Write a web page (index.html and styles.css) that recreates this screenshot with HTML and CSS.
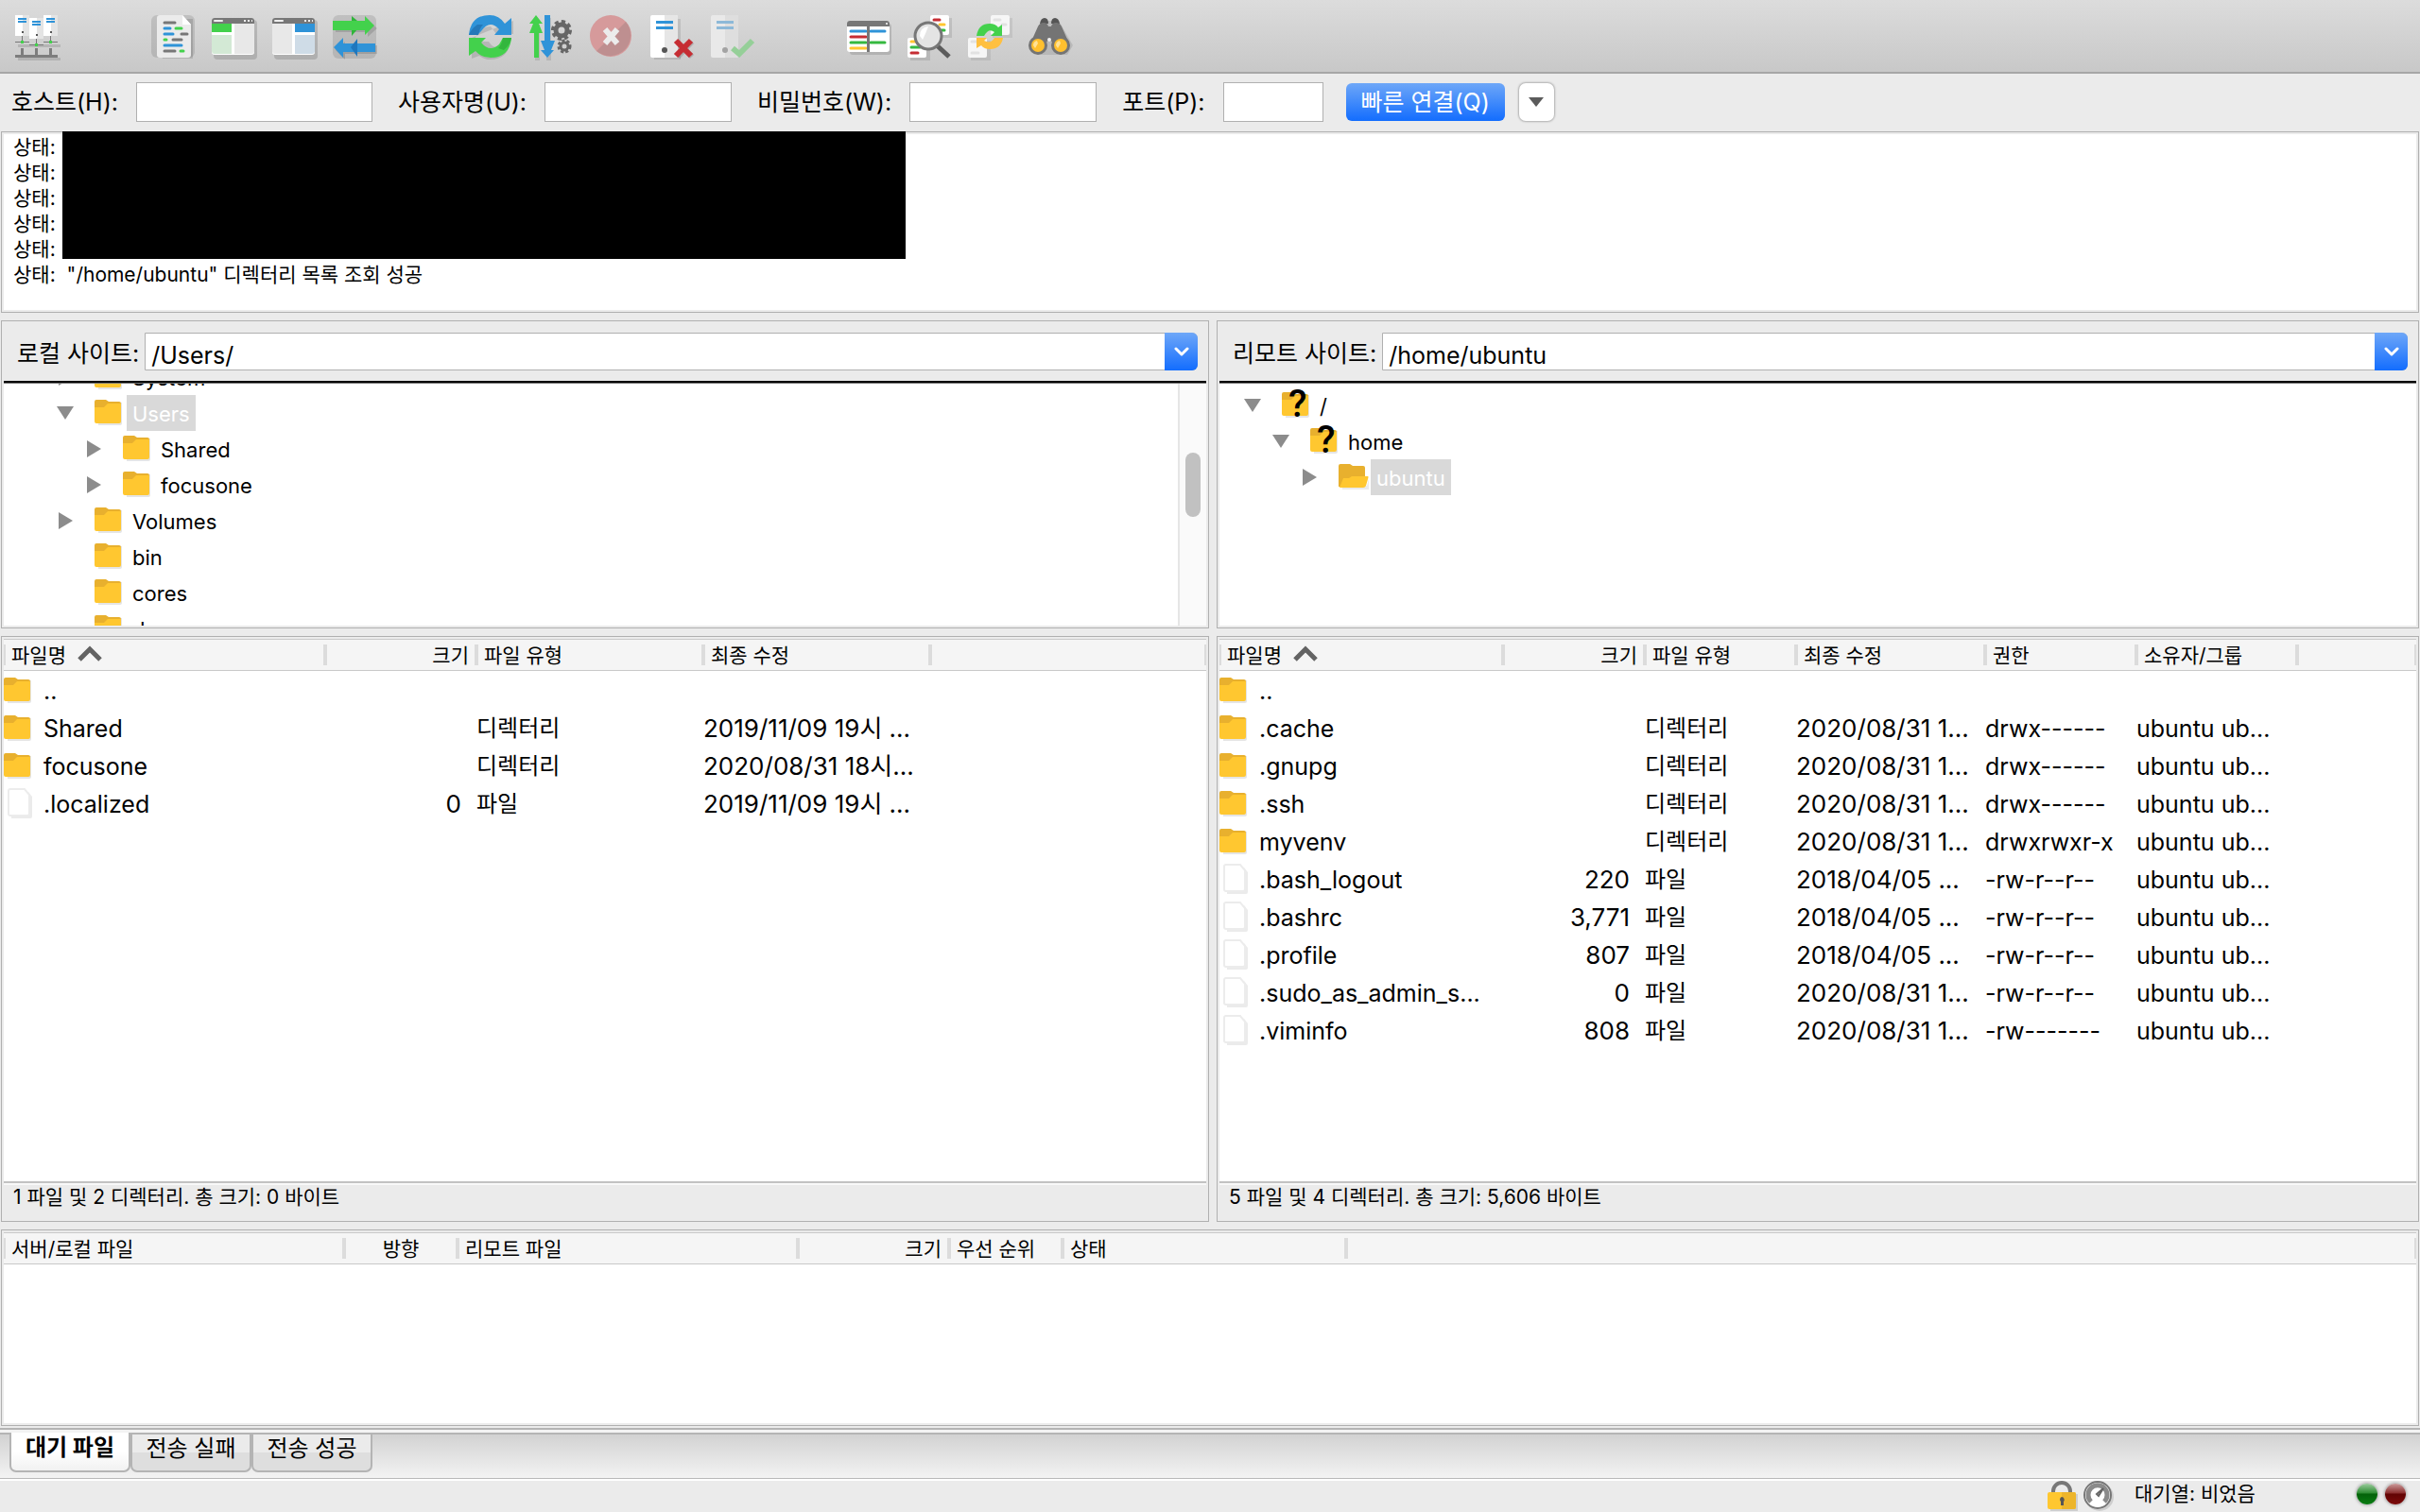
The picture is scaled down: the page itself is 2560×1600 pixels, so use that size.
FILE: index.html
```
<!DOCTYPE html>
<html lang="ko">

<head>
    <meta charset="UTF-8">
    <meta name="viewport" content="width=device-width, initial-scale=1.0">
    <title>FileZilla</title>
    <link rel="stylesheet" href="styles.css">
</head>

<body>
    <!-- shared icons -->
    <svg class="defs" aria-hidden="true">
        <symbol id="folder" viewBox="0 0 30 28" preserveAspectRatio="xMinYMin">
            <path d="M4 4h25v22q0 2-2 2H4z" fill="#000" opacity=".1" />
            <path d="M0 3q0-2 2-2h10l3 2h11q2 0 2 2v6H0z" fill="#e8b02e" />
            <path d="M0 9h10l4-4h14v19q0 2-2 2H2q-2 0-2-2z" fill="#ffc730" />
        </symbol>
        <symbol id="folder-open" viewBox="0 0 34 28" preserveAspectRatio="xMinYMin">
            <path d="M4 24h26l2-8v12H4z" fill="#000" opacity=".08" />
            <path d="M0 3q0-2 2-2h10l3 2h11q2 0 2 2v10L8 25H0z" fill="#e8b02e" />
            <path d="M5 16h6l3-2h17q1 0 0 3l-2 7q-1 2-3 2H1z" fill="#ffc730" />
        </symbol>
        <symbol id="file" viewBox="0 0 26 32">
            <path d="M4 4h18l4 5v21q0 2-2 2H4z" fill="#ebebeb" />
            <path d="M1 3q0-2 2-2h15l5 6v20q0 2-2 2H3q-2 0-2-2z" fill="#fff" stroke="#ececec" stroke-width="2" />
        </symbol>
        <symbol id="down" viewBox="0 0 18 16">
            <path d="M0 1h18L9 15z" fill="#8c8c8c" />
        </symbol>
        <symbol id="right" viewBox="0 0 18 18">
            <path d="M2 0v18l15-9z" fill="#8c8c8c" />
        </symbol>
        <symbol id="sort" viewBox="0 0 26 18">
            <path d="M2 15L13 4l11 11" fill="none" stroke="#636363" stroke-width="5" />
        </symbol>
        <symbol id="chevron" viewBox="0 0 16 10">
            <path d="M2 2l6 6 6-6" fill="none" stroke="#fff" stroke-width="3" stroke-linecap="round" stroke-linejoin="round" />
        </symbol>
    </svg>

    <header class="toolbar">
        <div class="group">
            <button class="tool" aria-label="사이트 관리자">
                <svg viewBox="0 0 48 48">
                    <path d="M3 31h45v3H3zM3 45h45v3H3z" fill="#000" opacity=".12" />
                    <path d="M0 0h15v22H0zM30 0h15v22H30z" fill="#fff" />
                    <path d="M8 0h7v22H8zM38 0h7v22h-7z" fill="#e4e4e4" />
                    <path d="M3 3h9v2H3zM3 6h9v2H3zM33 3h9v2h-9zM33 6h9v2h-9z" fill="#2f93d8" />
                    <path d="M15 3h15v22H15z" fill="#fff" />
                    <path d="M23 3h7v22h-7z" fill="#e4e4e4" />
                    <path d="M18 6h9v2h-9zM18 9h9v2h-9z" fill="#2f93d8" />
                    <path d="M7 22h1v6H7zM37 22h1v6h-1zM22 25h1v6h-1zM0 28h15v1H0zM30 28h15v1H30zM15 31h15v1H15z" fill="#777" />
                    <path d="M7 17h2v2H7zM22 20h2v2h-2zM37 17h2v2h-2z" fill="#555" />
                    <path d="M6 27h3v3H6zM36 27h3v3h-3zM21 30h3v3h-3z" fill="#43d14c" />
                    <path d="M6 35h3v7h12v-7h3v7h12v-7h3v7h6v3H0v-3h6z" fill="#7d7d7d" />
                </svg>
            </button>
        </div>
        <div class="group">
            <button class="tool" aria-label="메시지 로그">
                <svg viewBox="0 0 48 48">
                    <rect width="46" height="45" rx="6" fill="#000" opacity=".11" />
                    <path d="M9 4h35v42H12z" fill="#000" opacity=".12" />
                    <path d="M6 3q0-3 3-3h24l9 10v32q0 3-3 3H9q-3 0-3-3z" fill="#ebebeb" />
                    <path d="M33 0l9 10h-9z" fill="#fff" />
                    <g fill="none" stroke-width="3" stroke-linecap="round">
                        <path d="M14 8h11M32 20h6M23 26h9M14 38h11" stroke="#777" />
                        <path d="M14 14h6M14 20h9M14 32h18" stroke="#2f93d8" />
                        <path d="M26 14h6M14 26h2M31 38h3" stroke="#43d14c" />
                    </g>
                </svg>
            </button>
            <button class="tool" aria-label="로컬 트리">
                <svg viewBox="0 0 48 48">
                    <rect x="2" y="5" width="46" height="42" rx="4" fill="#000" opacity=".14" />
                    <rect y="3" width="45" height="39" rx="3" fill="#fff" />
                    <path d="M0 6q0-3 3-3h39q3 0 3 3v3H0z" fill="#777" />
                    <path d="M3 6h8" stroke="#eee" stroke-width="2" stroke-linecap="round" />
                    <path d="M34 5h2v2h-2zM38 5h2v2h-2zM42 5h1v2h-1z" fill="#eee" />
                    <path d="M0 9h21v9H0z" fill="#43d14c" />
                    <path d="M0 21h21v20H3q-3 0-3-3z" fill="#d3e9d5" />
                    <path d="M24 9h21v29q0 3-3 3H24z" fill="#e8e8e8" />
                </svg>
            </button>
            <button class="tool" aria-label="원격 트리">
                <svg viewBox="0 0 48 48">
                    <rect x="2" y="5" width="46" height="42" rx="4" fill="#000" opacity=".14" />
                    <rect y="3" width="45" height="39" rx="3" fill="#fff" />
                    <path d="M0 6q0-3 3-3h39q3 0 3 3v3H0z" fill="#777" />
                    <path d="M3 6h8" stroke="#eee" stroke-width="2" stroke-linecap="round" />
                    <path d="M34 5h2v2h-2zM38 5h2v2h-2zM42 5h1v2h-1z" fill="#eee" />
                    <path d="M24 9h21v9H24z" fill="#2f93d8" />
                    <path d="M24 21h21v17q0 3-3 3H24z" fill="#cfdce7" />
                    <path d="M0 9h21v32H3q-3 0-3-3z" fill="#e8e8e8" />
                </svg>
            </button>
            <button class="tool" aria-label="전송 대기열">
                <svg viewBox="0 0 48 48">
                    <rect width="46" height="46" rx="6" fill="#000" opacity=".11" />
                    <path d="M3 10h34v-5l10 9-10 9v-5H3zM13 28v4h34v9H13v6L3 37z" fill="#000" opacity=".13" />
                    <path d="M20 1l6 5v9l-6 7z" fill="#2fb53a" />
                    <path d="M0 6h34V1l10 10-10 10v-5H0z" fill="#43d14c" />
                    <path d="M1 34l10-10v6h34v9H11v6z" fill="#2f93d8" />
                    <path d="M26 25l-7 9 7 10z" fill="#1f77bd" />
                </svg>
            </button>
        </div>
        <div class="group">
            <button class="tool" aria-label="새로 고침">
                <svg viewBox="0 0 48 48">
                    <path d="M3 24h4q4-12 16-12l6 8h18V6M3 46V28h18q8 13 23-1-2 20-22 20-5 0-11-4z" fill="#000" opacity=".12" />
                    <path d="M0 21Q2 0 22 0q10 0 16 9l7-6v18H27l5-6Q22 4 13 17l-4 4z" fill="#2f93d8" />
                    <path d="M0 21q2-6 9-11h6q-4 4-5 11z" fill="#2478b8" />
                    <path d="M45 24q-2 21-22 21-10 0-16-7l-7 5V24h18l-5 5q9 11 19 2l4-7z" fill="#43d14c" />
                    <path d="M45 24q-1 7-8 13l-6-2q4-4 5-11z" fill="#33b63d" />
                </svg>
            </button>
            <button class="tool" aria-label="필터">
                <svg viewBox="0 0 48 48">
                    <path d="M6 10h5v38H6zM18 3h5v45h-5z" fill="#000" opacity=".1" />
                    <path d="M7 0l7 9h-4l4 10h-4v26H5V19H0L4 9H0z" fill="#43d14c" />
                    <path d="M16 0h6v27h5l-4 10h3l-7 8-7-8h4l-4-10h4z" fill="#2f93d8" />
                    <circle cx="34" cy="16" r="6" fill="none" stroke="#666" stroke-width="5" />
                    <circle cx="34" cy="16" r="9" fill="none" stroke="#666" stroke-width="4" stroke-dasharray="4 3" />
                    <circle cx="37" cy="33" r="4" fill="none" stroke="#666" stroke-width="3" />
                    <circle cx="37" cy="33" r="6" fill="none" stroke="#666" stroke-width="3" stroke-dasharray="3 2" />
                </svg>
            </button>
            <button class="tool" aria-label="취소" disabled>
                <svg viewBox="0 0 48 48">
                    <circle cx="22" cy="22" r="22" fill="#d69a9b" />
                    <path d="M38 7A22 22 0 0 1 7 38z" fill="#be8f90" />
                    <path d="M16 15l13 15M29 15L16 30" stroke="#ececec" stroke-width="6" />
                </svg>
            </button>
            <button class="tool" aria-label="연결 끊기">
                <svg viewBox="0 0 48 48">
                    <path d="M4 4h28v43H4z" fill="#000" opacity=".1" />
                    <rect width="29" height="45" rx="2" fill="#fff" />
                    <path d="M15 0h12q2 0 2 2v41q0 2-2 2H15z" fill="#e6e6e6" />
                    <path d="M6 6h18v3H6zM6 12h18v3H6z" fill="#2f93d8" />
                    <circle cx="15" cy="37" r="3" fill="#555" />
                    <path d="M29 29l15 15M44 28L29 44" stroke="#000" stroke-width="6" opacity=".15" />
                    <path d="M27 27l16 16M43 27L27 43" stroke="#c62d33" stroke-width="6" />
                </svg>
            </button>
            <button class="tool" aria-label="다시 연결" disabled>
                <svg viewBox="0 0 48 48">
                    <rect width="29" height="45" rx="2" fill="#e9e9e9" />
                    <path d="M15 0h12q2 0 2 2v41q0 2-2 2H15z" fill="#dedede" />
                    <path d="M6 6h18v3H6zM6 12h18v3H6z" fill="#8db9d8" />
                    <circle cx="15" cy="37" r="3" fill="#a3a3a3" />
                    <path d="M23 35l7 6 14-14" fill="none" stroke="#95cf98" stroke-width="6" />
                </svg>
            </button>
        </div>
        <div class="group">
            <button class="tool" aria-label="디렉터리 비교">
                <svg viewBox="0 0 48 48">
                    <rect x="3" y="9" width="44" height="33" rx="3" fill="#000" opacity=".13" />
                    <rect y="6" width="45" height="33" rx="3" fill="#fff" />
                    <path d="M0 9q0-3 3-3h39q3 0 3 3v3H0z" fill="#777" />
                    <circle cx="42" cy="9" r="1" fill="#fff" />
                    <g stroke-width="3" stroke-linecap="round">
                        <path d="M4 17h16M25 17h15" stroke="#2f93d8" />
                        <path d="M4 23h16" stroke="#c62d33" />
                        <path d="M4 29h16M25 29h15" stroke="#35b940" />
                        <path d="M4 35h16" stroke="#ffc730" />
                    </g>
                    <path d="M21 12h3v27h-3z" fill="#777" />
                </svg>
            </button>
            <button class="tool" aria-label="검색">
                <svg viewBox="0 0 48 48">
                    <path d="M26 3h21v21H26zM3 27h21v21H3z" fill="#000" opacity=".1" />
                    <rect x="24" width="20" height="21" rx="2" fill="#fff" />
                    <rect y="24" width="20" height="21" rx="2" fill="#fff" />
                    <g stroke-width="3" stroke-linecap="round">
                        <path d="M28 5h6M4 40h7" stroke="#c62d33" />
                        <path d="M34 10h5M4 28h5" stroke="#ffc730" />
                        <path d="M36 16h3M4 34h9" stroke="#35b940" />
                    </g>
                    <path d="M31 32l13 12" stroke="#5c5c5c" stroke-width="5" />
                    <circle cx="22" cy="22" r="14" fill="#e4e4e4" stroke="#777" stroke-width="3" />
                    <path d="M13 22q0-9 9-10-3 8-6 14z" fill="#fff" />
                </svg>
            </button>
            <button class="tool" aria-label="동기화 탐색">
                <svg viewBox="0 0 48 48">
                    <path d="M26 3h21v21H26zM3 27h21v21H3z" fill="#000" opacity=".07" />
                    <rect x="24" width="20" height="21" rx="2" fill="#f6f6f6" />
                    <rect y="24" width="20" height="21" rx="2" fill="#f6f6f6" />
                    <path d="M28 5h6M36 10h4M4 28h5M4 40h7" stroke="#e2e2e2" stroke-width="3" stroke-linecap="round" />
                    <path d="M9 22q2-13 14-13 6 0 9 4l4-3v12H24l4-4q-6-5-11 4z" fill="#43d14c" />
                    <path d="M37 24q-2 12-14 12-6 0-9-4l-5 3V24h11l-3 3q7 4 11-3z" fill="#ffc040" />
                </svg>
            </button>
            <button class="tool" aria-label="파일 찾기">
                <svg viewBox="0 0 48 48">
                    <path d="M6 24L16 6h16l15 26-6 10H9z" fill="#000" opacity=".1" />
                    <path d="M12 9q1-6 5-6 4 0 4 6zM24 9q0-6 4-6t5 6z" fill="#555" />
                    <path d="M10 12q2-4 6-4 4 0 5 4h3q1-4 5-4 4 0 6 4l8 18H26q-1-3-4-3t-4 3H2z" fill="#747474" />
                    <circle cx="10" cy="32" r="10" fill="#747474" />
                    <circle cx="34" cy="32" r="10" fill="#747474" />
                    <circle cx="10" cy="32" r="7" fill="#ffc02e" />
                    <circle cx="34" cy="32" r="7" fill="#ffc02e" />
                    <path d="M5 32q0-4 4-5l1 3-3 5zM29 32q0-4 4-5l1 3-3 5z" fill="#ffe296" />
                    <circle cx="22" cy="26" r="2" fill="#eee" />
                </svg>
            </button>
        </div>
    </header>

    <form class="quick">
        <label for="host">호스트(H):</label>
        <input type="text" id="host" class="wide">
        <label for="user">사용자명(U):</label>
        <input type="text" id="user">
        <label for="pass">비밀번호(W):</label>
        <input type="password" id="pass">
        <label for="port">포트(P):</label>
        <input type="text" id="port" class="narrow">
        <button type="button" class="connect">빠른 연결(Q)</button>
        <button type="button" class="history" aria-label="최근 연결">
            <svg viewBox="0 0 18 12"><path d="M1 1h16l-8 10z" fill="#5b5b5b" /></svg>
        </button>
    </form>

    <main>
        <section class="panel log">
            <p>상태:</p>
            <p>상태:</p>
            <p>상태:</p>
            <p>상태:</p>
            <p>상태:</p>
            <p>상태: <span>"/home/ubuntu" 디렉터리 목록 조회 성공</span></p>
            <div class="redacted"></div>
        </section>

        <div class="split">
            <section class="panel site">
                <div class="sitebar">
                    <label for="local">로컬 사이트:</label>
                    <div class="combo">
                        <select id="local"><option>/Users/</option></select>
                        <span class="arrow"><svg><use href="#chevron" /></svg></span>
                    </div>
                </div>
                <div class="treebox">
                    <ul class="tree scrolled">
                        <li><div class="node l1"><svg class="tw"><use href="#right" /></svg><svg class="ic"><use href="#folder" /></svg><span>System</span></div></li>
                        <li><div class="node l1"><svg class="tw"><use href="#down" /></svg><svg class="ic"><use href="#folder" /></svg><span class="selected">Users</span></div>
                            <ul>
                                <li><div class="node l2"><svg class="tw"><use href="#right" /></svg><svg class="ic"><use href="#folder" /></svg><span>Shared</span></div></li>
                                <li><div class="node l2"><svg class="tw"><use href="#right" /></svg><svg class="ic"><use href="#folder" /></svg><span>focusone</span></div></li>
                            </ul>
                        </li>
                        <li><div class="node l1"><svg class="tw"><use href="#right" /></svg><svg class="ic"><use href="#folder" /></svg><span>Volumes</span></div></li>
                        <li><div class="node l1"><svg class="tw"></svg><svg class="ic"><use href="#folder" /></svg><span>bin</span></div></li>
                        <li><div class="node l1"><svg class="tw"></svg><svg class="ic"><use href="#folder" /></svg><span>cores</span></div></li>
                        <li><div class="node l1"><svg class="tw"></svg><svg class="ic"><use href="#folder" /></svg><span>dev</span></div></li>
                    </ul>
                    <div class="scrollbar"><div class="thumb"></div></div>
                </div>
            </section>

            <section class="panel site">
                <div class="sitebar">
                    <label for="remote">리모트 사이트:</label>
                    <div class="combo">
                        <select id="remote"><option>/home/ubuntu</option></select>
                        <span class="arrow"><svg><use href="#chevron" /></svg></span>
                    </div>
                </div>
                <div class="treebox">
                    <ul class="tree">
                        <li><div class="node l0"><svg class="tw"><use href="#down" /></svg><i class="unknown"><svg class="ic"><use href="#folder" /></svg><b>?</b></i><span>/</span></div>
                            <ul>
                                <li><div class="node l1"><svg class="tw"><use href="#down" /></svg><i class="unknown"><svg class="ic"><use href="#folder" /></svg><b>?</b></i><span>home</span></div>
                                    <ul>
                                        <li><div class="node l2"><svg class="tw"><use href="#right" /></svg><svg class="ic"><use href="#folder-open" /></svg><span class="selected">ubuntu</span></div></li>
                                    </ul>
                                </li>
                            </ul>
                        </li>
                    </ul>
                </div>
            </section>
        </div>

        <div class="split">
            <section class="panel files">
                <table>
                    <colgroup><col class="w340"><col class="w160"><col class="w240"><col class="w240"><col></colgroup>
                    <thead>
                        <tr><th>파일명<svg class="sort"><use href="#sort" /></svg></th><th class="num">크기</th><th>파일 유형</th><th>최종 수정</th><th></th></tr>
                    </thead>
                    <tbody>
                        <tr><td><svg class="ic"><use href="#folder" /></svg>..</td><td></td><td></td><td></td><td></td></tr>
                        <tr><td><svg class="ic"><use href="#folder" /></svg>Shared</td><td></td><td class="type">디렉터리</td><td class="date">2019/11/09 19시 ...</td><td></td></tr>
                        <tr><td><svg class="ic"><use href="#folder" /></svg>focusone</td><td></td><td class="type">디렉터리</td><td class="date">2020/08/31 18시...</td><td></td></tr>
                        <tr><td><svg class="ic doc"><use href="#file" /></svg>.localized</td><td class="num">0</td><td class="type">파일</td><td class="date">2019/11/09 19시 ...</td><td></td></tr>
                    </tbody>
                </table>
                <div class="summary">1 파일 및 2 디렉터리. 총 크기: 0 바이트</div>
            </section>

            <section class="panel files">
                <table>
                    <colgroup><col class="w300"><col class="w150"><col class="w160"><col class="w200"><col class="w160"><col class="w170"><col></colgroup>
                    <thead>
                        <tr><th>파일명<svg class="sort"><use href="#sort" /></svg></th><th class="num">크기</th><th>파일 유형</th><th>최종 수정</th><th>권한</th><th>소유자/그룹</th><th></th></tr>
                    </thead>
                    <tbody>
                        <tr><td><svg class="ic"><use href="#folder" /></svg>..</td><td></td><td></td><td></td><td></td><td></td><td></td></tr>
                        <tr><td><svg class="ic"><use href="#folder" /></svg>.cache</td><td></td><td class="type">디렉터리</td><td class="date">2020/08/31 1...</td><td>drwx------</td><td>ubuntu ub...</td><td></td></tr>
                        <tr><td><svg class="ic"><use href="#folder" /></svg>.gnupg</td><td></td><td class="type">디렉터리</td><td class="date">2020/08/31 1...</td><td>drwx------</td><td>ubuntu ub...</td><td></td></tr>
                        <tr><td><svg class="ic"><use href="#folder" /></svg>.ssh</td><td></td><td class="type">디렉터리</td><td class="date">2020/08/31 1...</td><td>drwx------</td><td>ubuntu ub...</td><td></td></tr>
                        <tr><td><svg class="ic"><use href="#folder" /></svg>myvenv</td><td></td><td class="type">디렉터리</td><td class="date">2020/08/31 1...</td><td>drwxrwxr-x</td><td>ubuntu ub...</td><td></td></tr>
                        <tr><td><svg class="ic doc"><use href="#file" /></svg>.bash_logout</td><td class="num">220</td><td class="type">파일</td><td class="date">2018/04/05 ...</td><td>-rw-r--r--</td><td>ubuntu ub...</td><td></td></tr>
                        <tr><td><svg class="ic doc"><use href="#file" /></svg>.bashrc</td><td class="num">3,771</td><td class="type">파일</td><td class="date">2018/04/05 ...</td><td>-rw-r--r--</td><td>ubuntu ub...</td><td></td></tr>
                        <tr><td><svg class="ic doc"><use href="#file" /></svg>.profile</td><td class="num">807</td><td class="type">파일</td><td class="date">2018/04/05 ...</td><td>-rw-r--r--</td><td>ubuntu ub...</td><td></td></tr>
                        <tr><td><svg class="ic doc"><use href="#file" /></svg>.sudo_as_admin_s...</td><td class="num">0</td><td class="type">파일</td><td class="date">2020/08/31 1...</td><td>-rw-r--r--</td><td>ubuntu ub...</td><td></td></tr>
                        <tr><td><svg class="ic doc"><use href="#file" /></svg>.viminfo</td><td class="num">808</td><td class="type">파일</td><td class="date">2020/08/31 1...</td><td>-rw-------</td><td>ubuntu ub...</td><td></td></tr>
                    </tbody>
                </table>
                <div class="summary">5 파일 및 4 디렉터리. 총 크기: 5,606 바이트</div>
            </section>
        </div>

        <section class="panel queue">
            <table>
                <colgroup><col class="w360"><col class="w120"><col class="w360"><col class="w160"><col class="w120"><col class="w300"><col></colgroup>
                <thead>
                    <tr><th>서버/로컬 파일</th><th class="mid">방향</th><th>리모트 파일</th><th class="num">크기</th><th>우선 순위</th><th>상태</th><th></th></tr>
                </thead>
            </table>
        </section>
    </main>

    <nav class="tabs">
        <button class="active">대기 파일</button>
        <button>전송 실패</button>
        <button>전송 성공</button>
    </nav>

    <footer class="status">
        <svg class="badge" viewBox="0 0 32 32">
            <path d="M3 14h29v18H3z" fill="#000" opacity=".12" />
            <path d="M6 14v-3a9 9 0 0 1 18 0v3" fill="none" stroke="#777" stroke-width="4" />
            <rect y="12" width="30" height="18" rx="2" fill="#ffc730" />
            <path d="M15 12h13q2 0 2 2v14q0 2-2 2H15z" fill="#edb52b" />
            <path d="M15 17a3 3 0 0 1 2 5v4h-3v-4a3 3 0 0 1 1-5z" fill="#555" />
        </svg>
        <svg class="badge" viewBox="0 0 32 32">
            <circle cx="17" cy="17" r="15" fill="#000" opacity=".12" />
            <circle cx="15" cy="15" r="14" fill="#fff" stroke="#777" stroke-width="2" />
            <path d="M8 22a10 10 0 1 1 14 0" fill="none" stroke="#8a8a8a" stroke-width="5" />
            <path d="M14 14l7-6-5 8z" fill="#fff" stroke="#666" stroke-width="2" />
        </svg>
        <span class="queue-state">대기열: 비었음</span>
        <span class="led green"></span>
        <span class="led red"></span>
    </footer>
</body>

</html>
```
FILE: styles.css
```
* {
    margin: 0;
    padding: 0;
    box-sizing: border-box;
}

body {
    display: flex;
    flex-direction: column;
    height: 100vh;
    overflow: hidden;
    background-color: #ebebeb;
    color: #000;
    font-family: Inter, "Noto Sans CJK KR", sans-serif;
    font-size: 25px;
    line-height: 30px;
}

button, input, select {
    font: inherit;
    color: inherit;
    border: 0;
    background: none;
}

svg {
    display: block;
    flex: none;
}

.defs {
    display: none;
}

/* toolbar */
.toolbar {
    display: flex;
    gap: 96px;
    height: 78px;
    padding: 16px 16px 0;
    background: linear-gradient(#dcdcdc, #c8c8c8);
    border-bottom: 2px solid #a6a6a6;
}

.group {
    display: flex;
    gap: 16px;
}

.tool, .tool svg {
    width: 48px;
    height: 48px;
}

/* quick connect */
.quick {
    display: flex;
    align-items: center;
    height: 61px;
    padding: 0 12px 2px;
}

.quick label {
    margin-right: 19px;
    white-space: nowrap;
}

.quick input {
    width: 198px;
    height: 42px;
    margin-right: 27px;
    padding: 0 8px;
    background-color: #fff;
    border: 1px solid #b0b0b0;
}

.quick .wide {
    width: 250px;
}

.quick .narrow {
    width: 106px;
    margin-right: 24px;
}

.connect {
    width: 168px;
    height: 40px;
    margin-right: 15px;
    color: #fff;
    border-radius: 6px;
    background: linear-gradient(#6ea7f8, #136dfe);
    white-space: nowrap;
}

.history {
    display: flex;
    align-items: center;
    justify-content: center;
    width: 37px;
    height: 40px;
    border-radius: 7px;
    background-color: #fff;
    box-shadow: 0 0 2px 1px rgba(0, 0, 0, .25);
}

.history svg {
    width: 18px;
    height: 12px;
}

/* panels */
main {
    flex: 1;
    display: grid;
    grid-template-rows: 192px 326px 1fr 208px;
    gap: 8px;
    padding: 0 1px 2px;
    min-height: 0;
}

.split {
    display: grid;
    grid-template-columns: 1278fr 1272fr;
    gap: 8px;
    min-height: 0;
}

.panel {
    display: flex;
    flex-direction: column;
    min-width: 0;
    min-height: 0;
    padding: 2px;
    border: 1px solid #b0b0b0;
}

.log {
    position: relative;
    padding: 2px 12px;
    background-color: #fff;
    box-shadow: inset 0 0 0 2px #ebebeb;
    font-size: 21px;
    line-height: 27px;
}

.log span {
    margin-left: 6px;
}

.redacted {
    position: absolute;
    top: -1px;
    left: 64px;
    width: 892px;
    height: 135px;
    background-color: #000;
}

.sitebar {
    display: flex;
    align-items: center;
    padding: 10px 9px 11px 14px;
    border-bottom: 2px solid #000;
}

.sitebar label {
    margin-right: 6px;
    padding-top: 4px;
    white-space: nowrap;
}

.combo {
    position: relative;
    flex: 1;
}

.combo select {
    display: block;
    appearance: none;
    width: 100%;
    height: 40px;
    padding: 8px 40px 0 6px;
    background-color: #fff;
    border: 1px solid #b0b0b0;
    border-radius: 0 6px 6px 0;
}

.arrow {
    position: absolute;
    top: 0;
    right: 0;
    display: flex;
    align-items: center;
    justify-content: center;
    width: 35px;
    height: 40px;
    border-radius: 0 6px 6px 0;
    background: linear-gradient(#6ea7f8, #136dfe);
    pointer-events: none;
}

.arrow svg {
    width: 16px;
    height: 10px;
}

.treebox {
    flex: 1;
    display: flex;
    min-height: 0;
    overflow: hidden;
    background-color: #fff;
    border-top: 1px solid #777;
}

.tree {
    flex: 1;
    padding-top: 4px;
    font-size: 22px;
}

.tree ul, .tree {
    list-style: none;
}

.tree.scrolled {
    margin-top: -30px;
}

.node {
    display: flex;
    align-items: center;
    height: 38px;
    padding-left: 26px;
}

.node.l1 {
    padding-left: 56px;
}

.node.l2 {
    padding-left: 86px;
}

.node span {
    height: 38px;
    padding: 2px 6px 0;
    line-height: 36px;
}

.node .selected {
    color: #fff;
    background-color: #d9d9d9;
}

.tw {
    width: 18px;
    height: 18px;
    margin-right: 22px;
}

.ic {
    width: 34px;
    height: 28px;
}

.node .ic {
    margin-bottom: 3px;
}

.unknown {
    position: relative;
    font-style: normal;
}

.unknown b {
    position: absolute;
    top: 0;
    left: 7px;
    font-family: Roboto, sans-serif;
    font-size: 40px;
    font-weight: 500;
    line-height: 28px;
}

.scrollbar {
    width: 30px;
    padding: 73px 5px 0 6px;
    background-color: #fafafa;
    border-left: 2px solid #e6e6e6;
}

.thumb {
    width: 16px;
    height: 68px;
    border-radius: 8px;
    background-color: #c1c1c1;
}

/* lists */
.files, .queue {
    background-color: #fff;
    box-shadow: inset 0 0 0 2px #ebebeb;
}

table {
    width: 100%;
    table-layout: fixed;
    border-spacing: 0;
    font-size: 25px;
    white-space: nowrap;
}

th {
    height: 34px;
    padding: 2px 8px 0;
    text-align: left;
    font-size: 21px;
    font-weight: 400;
    line-height: 30px;
    border-top: 1px solid #c9c9c9;
    border-bottom: 1px solid #c9c9c9;
    background: linear-gradient(#dcdcdc, #dcdcdc) left center / 2px 22px no-repeat,
        linear-gradient(#dcdcdc, #dcdcdc) right center / 2px 22px no-repeat, #f5f5f5;
}

td {
    height: 40px;
    padding-top: 2px;
    line-height: 38px;
}

td .ic {
    float: left;
    width: 30px;
    margin: 4px 12px 0 0;
}

td .doc {
    width: 26px;
    height: 32px;
    margin: 2px 12px 0 4px;
}

.type {
    font-size: 24px;
}

.num {
    text-align: right;
}

td.num {
    padding-right: 16px;
}

td.num, .date {
    font-size: 26px;
}

.mid {
    text-align: center;
}

.sort {
    display: inline-block;
    width: 26px;
    height: 18px;
    margin-left: 12px;
}

.w120 { width: 120px; }
.w150 { width: 150px; }
.w160 { width: 160px; }
.w170 { width: 170px; }
.w200 { width: 200px; }
.w240 { width: 240px; }
.w300 { width: 300px; }
.w340 { width: 340px; }
.w360 { width: 360px; }

.summary {
    height: 40px;
    margin-top: auto;
    padding: 0 10px;
    font-size: 21px;
    background-color: #ebebeb;
    border-top: 2px solid #c2c2c2;
    box-shadow: inset 0 2px #f8f8f8;
}

/* queue tabs */
.tabs {
    display: flex;
    height: 56px;
    padding: 0 10px;
    border-top: 2px solid #b4b4b4;
    border-bottom: 2px solid #fff;
    background: linear-gradient(#f3f3f3 3px, #b4b4b4 3px, #b4b4b4 5px, #d2d2d2 5px, #f3f3f3 51px, #b9b9b9 51px);
}

.tabs button {
    width: 128px;
    height: 40px;
    margin-top: 5px;
    padding-bottom: 8px;
    border: 2px solid #b4b4b4;
    border-top-width: 0;
    border-radius: 0 0 7px 7px;
    background: linear-gradient(#ebebeb 50%, #dedede 50%);
    font-size: 24px;
    line-height: 30px;
    white-space: nowrap;
}

.tabs .active {
    height: 42px;
    margin-top: 3px;
    font-weight: 700;
    background: linear-gradient(#fff 50%, #f1f1f1);
}

/* status bar */
.status {
    display: flex;
    align-items: flex-start;
    height: 33px;
    padding-right: 15px;
    font-size: 21px;
}

.badge {
    width: 32px;
    height: 32px;
    margin-right: 6px;
}

.badge:first-child {
    margin-left: auto;
}

.queue-state {
    width: 235px;
    margin-left: 16px;
    line-height: 28px;
}

.led {
    width: 22px;
    height: 22px;
    margin: 3px 0 0 8px;
    border-radius: 50%;
    box-shadow: 0 0 3px 1px #aaa;
}

.green {
    margin-left: 0;
    background: linear-gradient(#9ccb9e, #2e8d33 45%, #04620a 50%, #0a7c12);
}

.red {
    background: linear-gradient(#cb9c9c, #8d2e2e 45%, #620404 50%, #7c0a0a);
}
```
